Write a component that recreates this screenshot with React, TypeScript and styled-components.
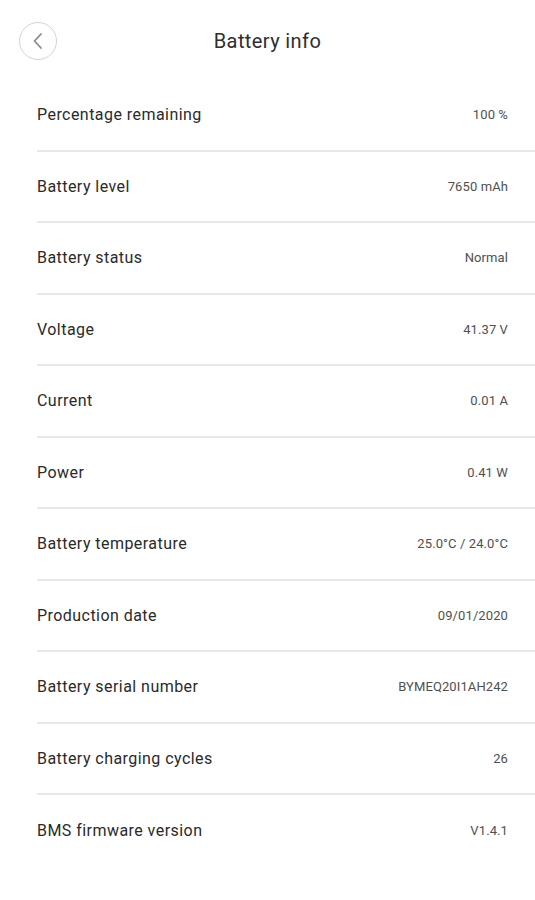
import React from "react";
import styled, { createGlobalStyle } from "styled-components";

const GlobalStyle = createGlobalStyle`
  html, body {
    margin: 0;
    padding: 0;
    background: #ffffff;
  }
  body {
    font-family: Roboto, "Noto Sans", sans-serif;
    -webkit-font-smoothing: antialiased;
  }
`;

const Page = styled.div`
  width: 100%;
  min-height: 900px;
  background: #ffffff;
`;

const Header = styled.header`
  position: relative;
  height: 80px;
  display: flex;
  align-items: flex-start;
  justify-content: center;
`;

const BackButton = styled.button`
  position: absolute;
  left: 19px;
  top: 22px;
  width: 38px;
  height: 38px;
  border-radius: 50%;
  border: 1px solid #d4d4d4;
  background: #fff;
  padding: 0;
  display: flex;
  align-items: center;
  justify-content: center;
  cursor: pointer;
`;

const Title = styled.h1`
  margin: 28px 0 0;
  font-size: 20px;
  line-height: 26px;
  font-weight: 400;
  color: #2e2e2e;
  letter-spacing: 0.4px;
`;

const List = styled.ul`
  list-style: none;
  margin: 0 0 0 37px;
  padding: 0;
`;

const Row = styled.li<{ last?: boolean }>`
  box-sizing: border-box;
  height: 71.5px;
  display: flex;
  align-items: center;
  justify-content: space-between;
  padding: 0 27px 0 0;
  border-bottom: ${({ last }) => (last ? "none" : "2px solid #e8e8e8")};
`;

const Label = styled.span`
  font-size: 16px;
  color: #2a2a2a;
  letter-spacing: 0.45px;
`;

const Value = styled.span`
  font-size: 13px;
  color: #505050;
  letter-spacing: 0.1px;
`;

const rows: [string, string][] = [
  ["Percentage remaining", "100 %"],
  ["Battery level", "7650 mAh"],
  ["Battery status", "Normal"],
  ["Voltage", "41.37 V"],
  ["Current", "0.01 A"],
  ["Power", "0.41 W"],
  ["Battery temperature", "25.0°C / 24.0°C"],
  ["Production date", "09/01/2020"],
  ["Battery serial number", "BYMEQ20I1AH242"],
  ["Battery charging cycles", "26"],
  ["BMS firmware version", "V1.4.1"],
];

export default function App() {
  return (
    <Page>
      <GlobalStyle />
      <Header>
        <BackButton aria-label="Back">
          <svg width="14" height="18" viewBox="0 0 14 18">
            <path
              d="M10 2 L3.5 9 L10 16"
              fill="none"
              stroke="#8a8a8a"
              strokeWidth="1.8"
              strokeLinecap="round"
              strokeLinejoin="round"
            />
          </svg>
        </BackButton>
        <Title>Battery info</Title>
      </Header>
      <List>
        {rows.map(([label, value], i) => (
          <Row key={label} last={i === rows.length - 1}>
            <Label>{label}</Label>
            <Value>{value}</Value>
          </Row>
        ))}
      </List>
    </Page>
  );
}
